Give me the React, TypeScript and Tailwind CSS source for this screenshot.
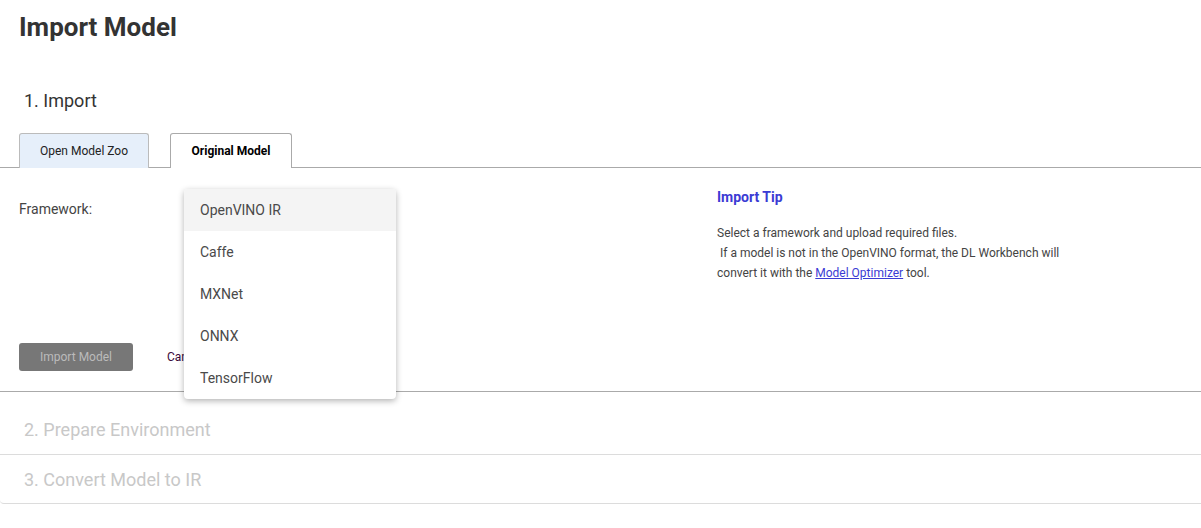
const frameworks = ["OpenVINO IR", "Caffe", "MXNet", "ONNX", "TensorFlow"];

export default function App() {
  return (
    <div className="relative h-[528px] w-[1201px] overflow-hidden bg-white font-['Roboto',sans-serif] text-[#333]">
      <h1 className="px-[19px] pt-[10px] text-[26px] font-bold leading-[34px] text-[#333]">Import Model</h1>

      <h2 className="mt-[45px] pl-[24px] text-[18px] leading-[24px] text-[#333]">1. Import</h2>

      {/* tabs */}
      <div className="mt-[20px] flex items-end gap-[21px] border-b border-[#aaa] pl-[19px]">
        <div className="-mb-px flex h-[35px] w-[130px] items-center justify-center rounded-t-[3px] border border-b-0 border-[#bbb] bg-[#e6effa] text-[12px] text-[#222]">
          Open Model Zoo
        </div>
        <div className="-mb-px flex h-[35px] w-[122px] items-center justify-center rounded-t-[3px] border border-b-0 border-[#aaa] bg-white text-[12px] font-bold text-black">
          Original Model
        </div>
      </div>

      {/* form */}
      <div className="flex h-[224px] border-b border-[#aaa]">
        <div className="flex w-[717px] flex-col justify-between pb-[20px] pl-[19px] pt-[32px]">
          <div className="text-[14px] leading-[18px] text-[#444]">Framework:</div>
          <div className="flex items-center gap-[34px]">
            <button className="h-[28px] w-[114px] rounded-[3px] bg-[#777] text-[12px] text-[#bbb]">Import Model</button>
            <span className="text-[12px] text-[#3a0a3a]">Cancel</span>
          </div>
        </div>
        <div className="pt-[20px]">
          <div className="text-[14px] font-bold leading-[18px] text-[#3b3bd4]">Import Tip</div>
          <p className="mt-[17px] text-[12px] leading-[20px] text-[#444]">
            Select a framework and upload required files.
            <br />
            &nbsp;If a model is not in the OpenVINO format, the DL Workbench will
            <br />
            convert it with the <span className="text-[#3b3bd4] underline">Model Optimizer</span> tool.
          </p>
        </div>
      </div>

      <div className="flex h-[63px] items-center border-b border-[#dcdcdc] pl-[24px] pt-[12px] text-[18px] text-[#c8c8c8]">
        2. Prepare Environment
      </div>
      <div className="flex h-[49px] items-center rounded-bl-[4px] border-b border-[#dcdcdc] pl-[24px] text-[18px] text-[#c8c8c8]">
        3. Convert Model to IR
      </div>

      {/* open dropdown menu */}
      <div className="absolute left-[184px] top-[189px] w-[212px] overflow-hidden rounded-[4px] bg-white shadow-[0_2px_6px_rgba(0,0,0,0.3)]">
        {frameworks.map((f, i) => (
          <div
            key={f}
            className={`flex h-[42px] items-center pl-[16px] text-[14px] text-[#4a4a4a] ${i === 0 ? "bg-[#f4f4f4]" : ""}`}
          >
            {f}
          </div>
        ))}
      </div>
    </div>
  );
}
